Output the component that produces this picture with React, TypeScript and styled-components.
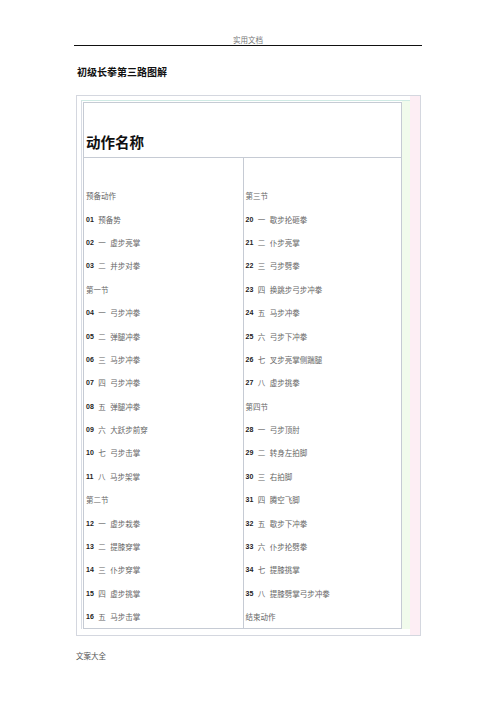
import React from "react";
import styled, { createGlobalStyle } from "styled-components";

type Item = { no?: string; ord?: string; name: string };

const left: Item[] = [
    { name: "预备动作" },
    { no: "01", name: "预备势" },
    { no: "02", ord: "一", name: "虚步亮掌" },
    { no: "03", ord: "二", name: "并步对拳" },
    { name: "第一节" },
    { no: "04", ord: "一", name: "弓步冲拳" },
    { no: "05", ord: "二", name: "弹腿冲拳" },
    { no: "06", ord: "三", name: "马步冲拳" },
    { no: "07", ord: "四", name: "弓步冲拳" },
    { no: "08", ord: "五", name: "弹腿冲拳" },
    { no: "09", ord: "六", name: "大跃步前穿" },
    { no: "10", ord: "七", name: "弓步击掌" },
    { no: "11", ord: "八", name: "马步架掌" },
    { name: "第二节" },
    { no: "12", ord: "一", name: "虚步栽拳" },
    { no: "13", ord: "二", name: "提膝穿掌" },
    { no: "14", ord: "三", name: "仆步穿掌" },
    { no: "15", ord: "四", name: "虚步挑掌" },
    { no: "16", ord: "五", name: "马步击掌" },
];

const right: Item[] = [
    { name: "第三节" },
    { no: "20", ord: "一", name: "歇步抡砸拳" },
    { no: "21", ord: "二", name: "仆步亮掌" },
    { no: "22", ord: "三", name: "弓步劈拳" },
    { no: "23", ord: "四", name: "换跳步弓步冲拳" },
    { no: "24", ord: "五", name: "马步冲拳" },
    { no: "25", ord: "六", name: "弓步下冲拳" },
    { no: "26", ord: "七", name: "叉步亮掌侧踹腿" },
    { no: "27", ord: "八", name: "虚步挑拳" },
    { name: "第四节" },
    { no: "28", ord: "一", name: "弓步顶肘" },
    { no: "29", ord: "二", name: "转身左拍脚" },
    { no: "30", ord: "三", name: "右拍脚" },
    { no: "31", ord: "四", name: "腾空飞脚" },
    { no: "32", ord: "五", name: "歇步下冲拳" },
    { no: "33", ord: "六", name: "仆步抡劈拳" },
    { no: "34", ord: "七", name: "提膝挑掌" },
    { no: "35", ord: "八", name: "提膝劈掌弓步冲拳" },
    { name: "结束动作" },
];

const Column = ({ items, divider }: { items: Item[]; divider?: boolean }) => (
    <Cell divider={divider}>
        {items.map((it, i) => (
            <Row key={i}>
                {it.no && <Num>{it.no}</Num>}
                {it.ord && <Ord>{it.ord}</Ord>}
                <span>{it.name}</span>
            </Row>
        ))}
    </Cell>
);

export default function App() {
    return (
        <>
            <GlobalStyle />
            <Page>
                <RunningHead>实用文档</RunningHead>
                <Title>初级长拳第三路图解</Title>
                <OuterFrame>
                    <MidFrame>
                        <Table>
                            <HeadCell>动作名称</HeadCell>
                            <Column items={left} />
                            <Column items={right} divider />
                        </Table>
                    </MidFrame>
                </OuterFrame>
                <Footer>文案大全</Footer>
            </Page>
        </>
    );
}

const GlobalStyle = createGlobalStyle`
    html, body {
        margin: 0;
        background: #fff;
    }
    body {
        font-family: "Noto Sans CJK SC", "Liberation Serif", serif;
    }
`;

const Page = styled.div`
    width: 348px;
    margin-left: 74px;
    display: flex;
    flex-direction: column;
`;

const RunningHead = styled.div`
    padding-top: 35px;
    height: 10px;
    line-height: 10px;
    font-size: 7.5px;
    color: #777;
    text-align: center;
    border-bottom: 1px solid #111;
`;

const Title = styled.div`
    margin: 20px 0 0 3px;
    font-size: 10px;
    line-height: 12px;
    font-weight: 700;
    color: #111;
`;

const OuterFrame = styled.div`
    margin: 17px 0 0 2px;
    width: 345px;
    box-sizing: border-box;
    border: 1px solid #d4d7df;
    padding: 4px 0 6px 4px;
    background: linear-gradient(to right, #fff calc(100% - 10px), #fdeef4 calc(100% - 10px));
`;

const MidFrame = styled.div`
    margin-right: 10px;
    border-top: 1px solid #cfeae4;
    border-left: 1px solid #d8dce4;
    padding: 1px 0 0 1px;
    background: linear-gradient(to right, #fff calc(100% - 8px), #f1fbec calc(100% - 8px));
`;

const Table = styled.div`
    margin-right: 8px;
    border: 1px solid #c6cbd4;
    display: grid;
    grid-template-columns: 1fr 1fr;
    grid-template-rows: 55px auto;
`;

const HeadCell = styled.div`
    grid-column: 1 / 3;
    display: flex;
    align-items: flex-end;
    padding: 0 0 6px 2px;
    border-bottom: 1px solid #c6cbd4;
    font-size: 14.5px;
    line-height: 18px;
    font-weight: 700;
    color: #111;
`;

const Cell = styled.div<{ divider?: boolean }>`
    padding: 26px 0 0 2px;
    border-left: ${(p) => (p.divider ? "1px solid #c6cbd4" : "none")};
    display: flex;
    flex-direction: column;
`;

const Row = styled.div`
    height: 23.4px;
    display: flex;
    align-items: center;
    font-size: 7.5px;
    color: #666;
    white-space: nowrap;
`;

const Num = styled.span`
    font-family: "Liberation Sans", sans-serif;
    font-weight: 700;
    color: #222;
    margin-right: 4.5px;
    font-size: 7px;
`;

const Ord = styled.span`
    margin-right: 4.5px;
`;

const Footer = styled.div`
    margin: 15px 0 0 2px;
    font-size: 7.5px;
    line-height: 10px;
    color: #555;
`;
